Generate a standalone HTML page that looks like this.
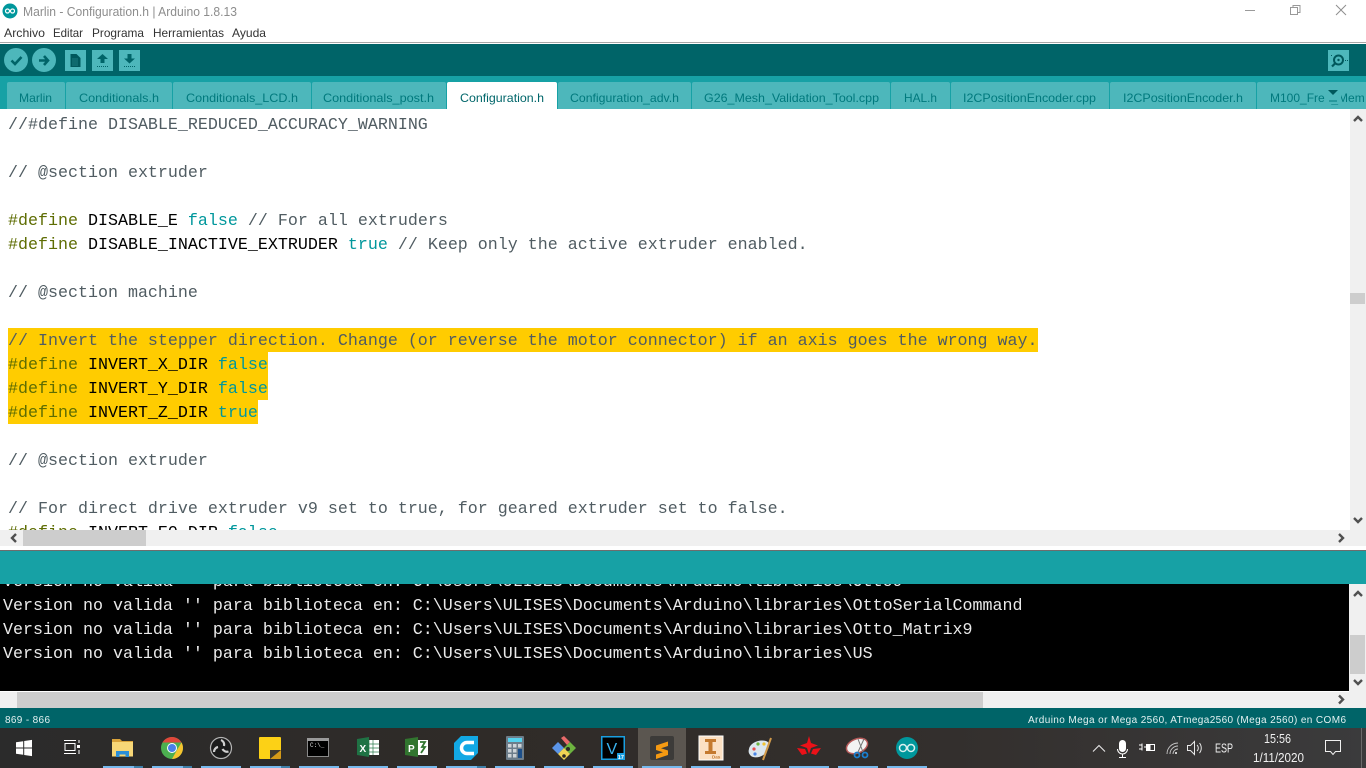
<!DOCTYPE html>
<html><head><meta charset="utf-8"><title>Marlin - Configuration.h | Arduino 1.8.13</title>
<style>
html,body{margin:0;padding:0;width:1366px;height:768px;overflow:hidden;background:#fff}
svg{display:block}
.s{font-family:"Liberation Sans",sans-serif}
.m{font-family:"Liberation Mono",monospace;font-size:16.667px;white-space:pre}
.t{font-size:12px;fill:#00797d}
.c{fill:#505c62}.d{fill:#5e6d03}.k{fill:#000}.b{fill:#00979c}
.o{fill:#eaeaea}
.arrow{fill:none;stroke:#505050;stroke-width:2.400}
</style></head><body>
<svg width="1366" height="768" viewBox="0 0 1366 768" xmlns="http://www.w3.org/2000/svg">
<defs>
<linearGradient id="tb" x1="0" x2="1" y1="0" y2="0"><stop offset="0" stop-color="#2b2b2b"/><stop offset=".35" stop-color="#2f2b28"/><stop offset=".7" stop-color="#332f2d"/><stop offset="1" stop-color="#3b3b3c"/></linearGradient>
<clipPath id="ed"><rect x="0" y="109" width="1350" height="421"/></clipPath>
<clipPath id="cs"><rect x="0" y="584" width="1349" height="107"/></clipPath>
<clipPath id="tabs"><rect x="0" y="82" width="1366" height="27"/></clipPath>
</defs>

<!-- Title bar -->
<rect width="1366" height="42" fill="#fff"/>
<circle cx="10" cy="11" r="7.500" fill="#00979c"/>
<path d="M5.500 11a2 2 0 0 1 4 0a2 2 0 0 1-4 0M10.500 11a2 2 0 0 1 4 0a2 2 0 0 1-4 0" fill="none" stroke="#fff" stroke-width="1.200"/>
<text class="s" x="23" y="16" font-size="12.500" fill="#8d8d8d" textLength="214" lengthAdjust="spacingAndGlyphs">Marlin - Configuration.h | Arduino 1.8.13</text>
<rect x="1245" y="10" width="10" height="1" fill="#9a9a9a"/>
<rect x="1293" y="5.500" width="7" height="7" fill="#fff" stroke="#999"/>
<rect x="1290.500" y="7.500" width="7" height="7" fill="#fff" stroke="#999"/>
<path d="M1336 5l10 10M1346 5l-10 10" stroke="#8f8f8f" stroke-width="1"/>
<g class="s" font-size="12" fill="#333">
<text x="4" y="37" textLength="41" lengthAdjust="spacingAndGlyphs">Archivo</text>
<text x="53" y="37" textLength="30" lengthAdjust="spacingAndGlyphs">Editar</text>
<text x="92" y="37" textLength="52" lengthAdjust="spacingAndGlyphs">Programa</text>
<text x="153" y="37" textLength="71" lengthAdjust="spacingAndGlyphs">Herramientas</text>
<text x="232" y="37" textLength="34" lengthAdjust="spacingAndGlyphs">Ayuda</text>
</g>
<rect y="42" width="1366" height="1" fill="#a8a8a8"/>
<rect y="43" width="1366" height="1" fill="#fff"/>

<!-- Toolbar -->
<rect y="44" width="1366" height="32" fill="#006468"/>
<rect y="76" width="1366" height="33" fill="#17a1a5"/>
<circle cx="16" cy="60" r="12" fill="#4db7bb"/>
<circle cx="44" cy="60" r="12" fill="#4db7bb"/>
<path d="M11.500 60.500l3.500 3.500l6.500-7" fill="none" stroke="#006468" stroke-width="2.600"/>
<path d="M39 60.500h8M44 56l4 4.500l-4 4.500" fill="none" stroke="#006468" stroke-width="2.600"/>
<rect x="65" y="50" width="21" height="21" fill="#4db7bb"/>
<rect x="92" y="50" width="21" height="21" fill="#4db7bb"/>
<rect x="119" y="50" width="21" height="21" fill="#4db7bb"/>
<rect x="1328" y="50" width="21" height="21" fill="#4db7bb"/>
<path d="M70.500 54h6l4 4v9h-10z" fill="#00585c"/>
<path d="M72.500 59h6M72.500 61h6M72.500 63h6M72.500 65h6" stroke="#4db7bb" stroke-width=".7" stroke-dasharray="1 1"/>
<path d="M102.500 54l5.500 5h-3.500v4h-4v-4h-3.500z" fill="#006468"/>
<path d="M97 66.500h11" stroke="#006468" stroke-dasharray="1 1"/>
<path d="M129.500 63.500l5.500-5h-3.500v-4.500h-4v4.500h-3.500z" fill="#006468"/>
<path d="M124 66.500h11" stroke="#006468" stroke-dasharray="1 1"/>
<circle cx="1338.500" cy="60" r="4.500" fill="none" stroke="#00585c" stroke-width="2"/>
<circle cx="1338.500" cy="60" r="1.200" fill="#00585c"/>
<path d="M1335 63.500l-3 3" stroke="#00585c" stroke-width="2.200"/>
<path d="M1345 60.500h1M1347 60.500h1M1331 55.500h1" stroke="#00585c"/>

<!-- Tabs -->
<g fill="#4db7bb">
<path d="M7 109V84q0-2 2-2h54q2 0 2 2v25z"/>
<path d="M66 109V84q0-2 2-2h102q2 0 2 2v25z"/>
<path d="M173 109V84q0-2 2-2h134q2 0 2 2v25z"/>
<path d="M312 109V84q0-2 2-2h130q2 0 2 2v25z"/>
<path d="M447 109V84q0-2 2-2h106q2 0 2 2v25z" fill="#fff"/>
<path d="M558 109V84q0-2 2-2h129q2 0 2 2v25z"/>
<path d="M692 109V84q0-2 2-2h194q2 0 2 2v25z"/>
<path d="M891 109V84q0-2 2-2h55q2 0 2 2v25z"/>
<path d="M951 109V84q0-2 2-2h154q2 0 2 2v25z"/>
<path d="M1110 109V84q0-2 2-2h142q2 0 2 2v25z"/>
<path d="M1257 109V84q0-2 2-2h107v27z"/>
</g>
<g class="s t" clip-path="url(#tabs)">
<text x="19" y="102" textLength="33" lengthAdjust="spacingAndGlyphs">Marlin</text>
<text x="79" y="102" textLength="80" lengthAdjust="spacingAndGlyphs">Conditionals.h</text>
<text x="186" y="102" textLength="112" lengthAdjust="spacingAndGlyphs">Conditionals_LCD.h</text>
<text x="323" y="102" textLength="111" lengthAdjust="spacingAndGlyphs">Conditionals_post.h</text>
<text x="460" y="102" textLength="84" lengthAdjust="spacingAndGlyphs" style="fill:#00666a">Configuration.h</text>
<text x="570" y="102" textLength="109" lengthAdjust="spacingAndGlyphs">Configuration_adv.h</text>
<text x="704" y="102" textLength="175" lengthAdjust="spacingAndGlyphs">G26_Mesh_Validation_Tool.cpp</text>
<text x="904" y="102" textLength="33" lengthAdjust="spacingAndGlyphs">HAL.h</text>
<text x="963" y="102" textLength="133" lengthAdjust="spacingAndGlyphs">I2CPositionEncoder.cpp</text>
<text x="1123" y="102" textLength="120" lengthAdjust="spacingAndGlyphs">I2CPositionEncoder.h</text>
<text x="1270" y="102">M100_Free_Mem</text>
</g>
<rect x="1325" y="88" width="16" height="16" fill="#4db7bb"/>
<path d="M1328 90h10l-5 5z" fill="#00585c"/>
<path d="M1329 101h8" stroke="#00797d"/>

<!-- Editor -->
<rect y="109" width="1350" height="421" fill="#fff"/>
<g clip-path="url(#ed)">
<rect x="8" y="328" width="1030" height="24" fill="#ffcc00"/>
<rect x="8" y="352" width="260" height="24" fill="#ffcc00"/>
<rect x="8" y="376" width="260" height="24" fill="#ffcc00"/>
<rect x="8" y="400" width="250" height="24" fill="#ffcc00"/>
<g class="m">
<text x="8" y="129" class="c">//#define DISABLE_REDUCED_ACCURACY_WARNING</text>
<text x="8" y="177" class="c">// @section extruder</text>
<text x="8" y="225"><tspan class="d">#define</tspan><tspan class="k"> DISABLE_E </tspan><tspan class="b">false</tspan><tspan class="c"> // For all extruders</tspan></text>
<text x="8" y="249"><tspan class="d">#define</tspan><tspan class="k"> DISABLE_INACTIVE_EXTRUDER </tspan><tspan class="b">true</tspan><tspan class="c"> // Keep only the active extruder enabled.</tspan></text>
<text x="8" y="297" class="c">// @section machine</text>
<text x="8" y="345" class="c">// Invert the stepper direction. Change (or reverse the motor connector) if an axis goes the wrong way.</text>
<text x="8" y="369"><tspan class="d">#define</tspan><tspan class="k"> INVERT_X_DIR </tspan><tspan class="b">false</tspan></text>
<text x="8" y="393"><tspan class="d">#define</tspan><tspan class="k"> INVERT_Y_DIR </tspan><tspan class="b">false</tspan></text>
<text x="8" y="417"><tspan class="d">#define</tspan><tspan class="k"> INVERT_Z_DIR </tspan><tspan class="b">true</tspan></text>
<text x="8" y="465" class="c">// @section extruder</text>
<text x="8" y="513" class="c">// For direct drive extruder v9 set to true, for geared extruder set to false.</text>
<text x="8" y="537"><tspan class="d">#define</tspan><tspan class="k"> INVERT_E0_DIR </tspan><tspan class="b">false</tspan></text>
</g>
</g>
<!-- Editor scrollbars -->
<rect x="1350" y="109" width="16" height="441" fill="#f0f0f0"/>
<rect x="1350" y="293" width="15" height="11" fill="#cdcdcd"/>
<path class="arrow" d="M1354 121l4-4l4 4M1354 518l4 4l4-4"/>
<rect y="530" width="1350" height="16" fill="#f0f0f0"/>
<rect x="23" y="530" width="123" height="16" fill="#cdcdcd"/>
<path class="arrow" d="M16 534l-4 4l4 4M1339 534l4 4l-4 4"/>
<rect y="546" width="1366" height="4" fill="#fff"/>
<rect y="550" width="1366" height="1" fill="#6d6d6d"/>
<rect y="551" width="1366" height="33" fill="#17a1a5"/>

<!-- Console -->
<rect y="584" width="1349" height="107" fill="#000"/>
<g clip-path="url(#cs)" class="m o">
<text x="3" y="586">Version no valida '' para biblioteca en: C:\Users\ULISES\Documents\Arduino\libraries\Otto9</text>
<text x="3" y="610">Version no valida '' para biblioteca en: C:\Users\ULISES\Documents\Arduino\libraries\OttoSerialCommand</text>
<text x="3" y="634">Version no valida '' para biblioteca en: C:\Users\ULISES\Documents\Arduino\libraries\Otto_Matrix9</text>
<text x="3" y="658">Version no valida '' para biblioteca en: C:\Users\ULISES\Documents\Arduino\libraries\US</text>
</g>
<rect x="1349" y="584" width="17" height="124" fill="#f0f0f0"/>
<rect x="1350" y="635" width="15" height="39" fill="#cdcdcd"/>
<path class="arrow" d="M1354 596l4-4l4 4M1354 680l4 4l4-4"/>
<rect y="691" width="1349" height="1" fill="#fff"/>
<rect y="692" width="1366" height="16" fill="#f0f0f0"/>
<rect x="17" y="692" width="966" height="16" fill="#cdcdcd"/>
<path class="arrow" d="M1339 695.500l4 4l-4 4"/>

<!-- Status -->
<rect y="708" width="1366" height="20" fill="#006468"/>
<text class="s" x="5" y="723" font-size="10" fill="#e4f2f2" textLength="45" lengthAdjust="spacing">869 - 866</text>
<text class="s" x="1028" y="723" font-size="10" fill="#e4f2f2" textLength="318" lengthAdjust="spacing">Arduino Mega or Mega 2560, ATmega2560 (Mega 2560) en COM6</text>

<!-- Taskbar -->
<rect y="728" width="1366" height="40" fill="url(#tb)"/>
<rect x="638" y="728" width="48" height="40" fill="#5b5650"/>
<g fill="#76b9ed">
<rect x="103" y="766" width="40" height="2"/><rect x="152" y="766" width="40" height="2"/><rect x="201" y="766" width="40" height="2"/><rect x="250" y="766" width="40" height="2"/><rect x="299" y="766" width="40" height="2"/><rect x="348" y="766" width="40" height="2"/><rect x="397" y="766" width="40" height="2"/><rect x="446" y="766" width="40" height="2"/><rect x="495" y="766" width="40" height="2"/><rect x="544" y="766" width="40" height="2"/><rect x="593" y="766" width="40" height="2"/><rect x="642" y="766" width="40" height="2"/><rect x="691" y="766" width="40" height="2"/><rect x="740" y="766" width="40" height="2"/><rect x="789" y="766" width="40" height="2"/><rect x="838" y="766" width="40" height="2"/><rect x="887" y="766" width="40" height="2"/>
</g>
<g fill="#3f7fa8"><rect x="134" y="766" width="9" height="2"/><rect x="183" y="766" width="9" height="2"/><rect x="281" y="766" width="9" height="2"/><rect x="477" y="766" width="9" height="2"/></g>
<!-- Start -->
<path d="M16 742.200l7.200-1v6.300H16zM24.200 741l7.800-1.100v7.600h-7.800zM16 748.500h7.200v6.300l-7.200-1zM24.200 748.500H32v7.600l-7.800-1.100z" fill="#fff"/>
<!-- Task view -->
<path d="M65 743.500h10v7H65zM64 740.500h12M64 753.500h12M79 740v3M79 750v4" fill="none" stroke="#fff" stroke-width="1"/>
<rect x="77" y="745" width="3" height="3" fill="#fff"/>
<!-- Explorer -->
<path d="M112 739h8l2 2h11v6h-21z" fill="#d9a33a"/>
<rect x="112" y="742" width="21" height="14.500" fill="#f7d777"/>
<path d="M116 757v-6h13v6h-3.500v-2.500h-6v2.500z" fill="#2b8fd8"/>
<!-- Chrome -->
<circle cx="172" cy="748" r="11" fill="#4caf50"/>
<path d="M162.500 742.500A11 11 0 0 1 181.500 742.500H172z" fill="#e0463a"/>
<path d="M181.500 742.500A11 11 0 0 1 172 759L177 750z" fill="#f6c42f"/>
<circle cx="172" cy="748" r="5" fill="#fff"/><circle cx="172" cy="748" r="4" fill="#4a7fe8"/>
<!-- OBS -->
<circle cx="221" cy="748" r="10.500" fill="#1c1c1c" stroke="#b5b5b5" stroke-width="1.200"/>
<path d="M221 740a5 5 0 0 1 3 6M228.500 751.500a5 5 0 0 1-6-2.500M214 752a5 5 0 0 1 4-5" fill="none" stroke="#d0d0d0" stroke-width="2.200"/>
<!-- Sticky -->
<rect x="259" y="737" width="22" height="22" rx="1" fill="#fcd116"/>
<path d="M270 759v-9h11v8q0 1-1 1z" fill="#3e3a30"/>
<path d="M270 759l11-9v8q0 1-1 1z" fill="#d49a18"/>
<!-- CMD -->
<rect x="307.500" y="738.500" width="21" height="18" fill="#000" stroke="#8a8a8a"/>
<rect x="307" y="738" width="22" height="3" fill="#9a9a9a"/>
<text x="310" y="747" font-family="Liberation Mono,monospace" font-size="6" fill="#ddd">C:\_</text>
<!-- Excel -->
<rect x="367" y="740" width="12" height="15" fill="#fff"/>
<path d="M369 740v15M373 740v15M367 744h12M367 748h12M367 752h12" stroke="#2e7d4f" stroke-width=".7"/>
<path d="M357 739l12-2v20l-12-2z" fill="#1f7244"/>
<text class="s" x="359.500" y="752" font-size="10" font-weight="700" fill="#fff">X</text>
<!-- Project -->
<rect x="416" y="740" width="12" height="15" fill="#fff"/>
<path d="M420 742h5l-3 5h3l-4 6" fill="none" stroke="#31752f" stroke-width="1.800"/>
<path d="M405 739l13-2v20l-13-2z" fill="#31752f"/>
<text class="s" x="408" y="752" font-size="10" font-weight="700" fill="#fff">P</text>
<!-- Cura-like -->
<path d="M461 736h17v17l-7 7h-17v-17z" fill="#12a8e4"/>
<path d="M474 742.500h-7a5.500 5.500 0 0 0 0 11h7" fill="none" stroke="#fff" stroke-width="3.500"/>
<!-- Calc -->
<rect x="506" y="736" width="18" height="24" rx="1" fill="#6d7d8a"/>
<rect x="508" y="738" width="14" height="4" fill="#57d2ee"/>
<g fill="#cfd4d8"><rect x="508" y="744" width="3.500" height="3.500"/><rect x="513" y="744" width="3.500" height="3.500"/><rect x="518" y="744" width="3.500" height="3.500"/><rect x="508" y="749" width="3.500" height="3.500"/><rect x="513" y="749" width="3.500" height="3.500"/><rect x="508" y="754" width="3.500" height="3.500"/><rect x="513" y="754" width="3.500" height="3.500"/></g>
<rect x="518" y="749" width="4" height="9" fill="#1c4f8a"/>
<!-- Diamonds -->
<path d="M561 738l3-2l6 6l-3 3z" fill="#e86a6a"/>
<path d="M552 748l6-6l6 6l-6 6z" fill="#5b95e8"/>
<path d="M564 748l6-6l6 6l-6 6z" fill="#6db33f"/>
<path d="M558 754l6-6l6 6l-6 6z" fill="#f1d354"/>
<circle cx="568" cy="749" r="2" fill="#2e2a27"/><circle cx="564" cy="756" r="1.800" fill="#2e2a27"/>
<!-- Vegas -->
<rect x="601.750" y="736.750" width="22.500" height="22.500" fill="#000" stroke="#1a9fe0" stroke-width="1.500"/>
<text class="s" x="606.500" y="754" font-size="16" fill="#3ab4f0">V</text>
<rect x="617" y="753" width="8" height="7" fill="#1a9fe0"/>
<text class="s" x="617.800" y="759" font-size="5.500" font-weight="700" fill="#fff">17</text>
<!-- Sublime -->
<rect x="650" y="736" width="24" height="24" rx="2" fill="#3c3b39"/>
<path d="M656 745.500l12-4v4.500l-7 2.300l7 2.200v4.500l-12 4v-4.500l7-2.300l-7-2.200z" fill="#f59a12"/>
<!-- Inventor -->
<rect x="699" y="736" width="24" height="24" fill="#fbe0c3"/>
<rect x="699" y="736" width="24" height="24" fill="none" stroke="#fff"/>
<path d="M705 739h11v3h-3.500v9h3.500v3h-11v-3h3.500v-9H705z" fill="#c47a2f"/>
<text class="s" x="712" y="758.500" font-size="4.500" font-weight="700" fill="#c47a2f">Das</text>
<!-- Palette -->
<path d="M749 749c1-6 10-10 17-8c5 2 3 6 1 10c-3 6-12 8-16 5c-2-2-3-4-2-7z" fill="#dbe6ee"/>
<circle cx="754" cy="749" r="1.600" fill="#e84d4d"/><circle cx="758" cy="744" r="1.600" fill="#6db33f"/><circle cx="764" cy="744" r="1.600" fill="#f1c232"/><circle cx="755" cy="754" r="1.600" fill="#4a86e8"/>
<path d="M771 738l-8 22" stroke="#d19a4a" stroke-width="2"/>
<!-- Red star -->
<path d="M809 736l2 7l7 2.500l-7 2.500l-2 6l-2-6l-7-2.500l7-2.500z" fill="#ec1118"/>
<path d="M797 748l8 1l4 9l4-9l8-1l-5 7l-5-1.500l-2 4.500l-2-4.500l-5 1.500z" fill="#ec1118"/>
<!-- Snipping -->
<ellipse cx="857" cy="746" rx="11" ry="7" fill="#f3f3f3" stroke="#b75a5a" stroke-width="1.500" transform="rotate(-22 857 746)"/>
<path d="M858 739l5 13M864 739l-6 13" stroke="#777" stroke-width="1"/>
<circle cx="857" cy="755" r="2.500" fill="none" stroke="#1a7fd0" stroke-width="1.800"/><circle cx="865" cy="755" r="2.500" fill="none" stroke="#1a7fd0" stroke-width="1.800"/>
<!-- Arduino -->
<circle cx="907" cy="748" r="11" fill="#00979c"/>
<path d="M899.500 748a3 3 0 0 1 7 0a3 3 0 0 1-7 0M907.500 748a3 3 0 0 1 7 0a3 3 0 0 1-7 0" fill="none" stroke="#d9f0f0" stroke-width="1.500"/>

<!-- Tray -->
<path d="M1093 751.500l6-6l6 6" fill="none" stroke="#e8e8e8" stroke-width="1.100"/>
<rect x="1119" y="740" width="7" height="12" rx="3.500" fill="#fff"/>
<path d="M1117.500 749a5 5 0 0 0 10 0M1122.500 754v3M1119 757.500h7" fill="none" stroke="#fff"/>
<path d="M1139 745h3M1139 749h3M1142 743.500v7M1144 747h2" stroke="#fff"/>
<rect x="1146.500" y="744.500" width="8" height="6" fill="none" stroke="#fff"/>
<rect x="1147" y="745" width="3.500" height="5" fill="#fff"/>
<path d="M1167 754a11 11 0 0 1 11-11M1170 754a8 8 0 0 1 8-8M1173 754a5 5 0 0 1 5-5" fill="none" stroke="#c8c8c8" stroke-width=".9"/>
<circle cx="1176" cy="753" r="1" fill="#fff"/>
<path d="M1187.500 745.500h3l4-4v13l-4-4h-3z" fill="none" stroke="#e8e8e8"/>
<path d="M1197 745a4 4 0 0 1 0 6M1199.500 743a8 8 0 0 1 0 10" fill="none" stroke="#e8e8e8"/>
<text class="s" x="1215" y="752.500" font-size="13" fill="#f0f0f0" textLength="18" lengthAdjust="spacingAndGlyphs">ESP</text>
<text class="s" x="1264" y="743" font-size="13" fill="#f0f0f0" textLength="27" lengthAdjust="spacingAndGlyphs">15:56</text>
<text class="s" x="1253" y="762" font-size="13" fill="#f0f0f0" textLength="51" lengthAdjust="spacingAndGlyphs">1/11/2020</text>
<path d="M1325.500 740.500h15v11h-5l-2.500 3l-2.500-3h-5z" fill="none" stroke="#f0f0f0"/>
<rect x="1361" y="728" width="1" height="40" fill="#6a6a6a"/>
</svg>
</body></html>
